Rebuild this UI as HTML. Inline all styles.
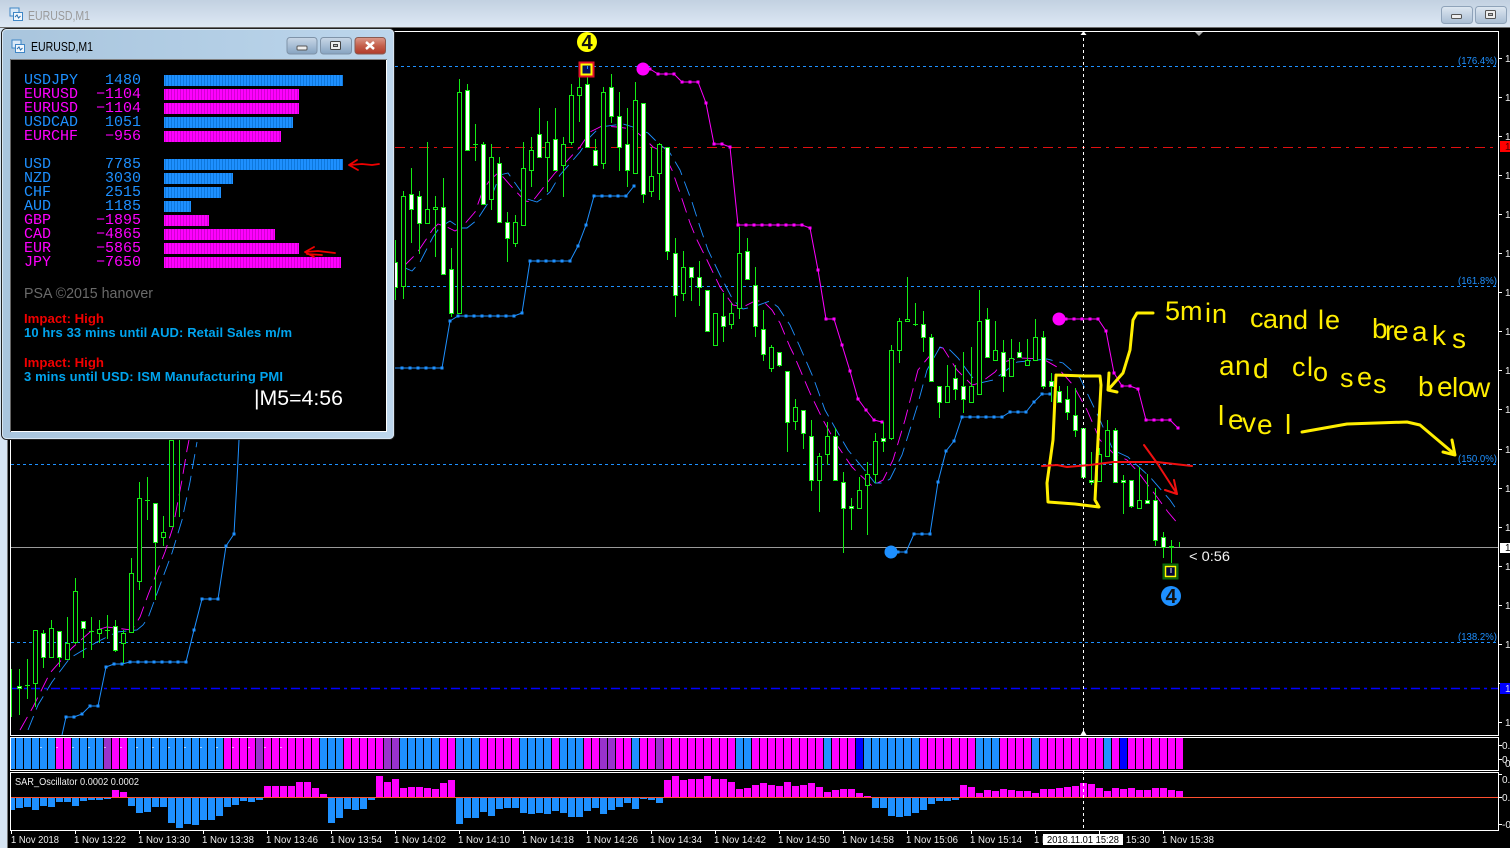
<!DOCTYPE html>
<html><head><meta charset="utf-8"><title>EURUSD,M1</title>
<style>html,body{margin:0;padding:0;background:#000;overflow:hidden}svg{display:block}text{font-family:"Liberation Sans",sans-serif}.m text{font-family:"Liberation Mono",monospace}</style></head>
<body>
<svg width="1510" height="848" viewBox="0 0 1510 848" xmlns="http://www.w3.org/2000/svg">
<defs>
<linearGradient id="tb" x1="0" y1="0" x2="0" y2="1"><stop offset="0" stop-color="#c2d1e1"/><stop offset="1" stop-color="#dde8f4"/></linearGradient>
<linearGradient id="pt" x1="0" y1="0" x2="1" y2="0"><stop offset="0" stop-color="#a9c5dd"/><stop offset=".6" stop-color="#b4cfe6"/><stop offset="1" stop-color="#bdd6ec"/></linearGradient>
<linearGradient id="btn" x1="0" y1="0" x2="0" y2="1"><stop offset="0" stop-color="#dfe8f2"/><stop offset=".5" stop-color="#c3d2e2"/><stop offset="1" stop-color="#a9bdd3"/></linearGradient>
<linearGradient id="btnp" x1="0" y1="0" x2="0" y2="1"><stop offset="0" stop-color="#c9d7e6"/><stop offset=".5" stop-color="#a8bed5"/><stop offset="1" stop-color="#86a3c0"/></linearGradient>
<linearGradient id="cls" x1="0" y1="0" x2="0" y2="1"><stop offset="0" stop-color="#dc9a8c"/><stop offset=".5" stop-color="#c4604c"/><stop offset="1" stop-color="#b03a2a"/></linearGradient>
<pattern id="sb" width="3" height="1" patternUnits="userSpaceOnUse"><rect width="3" height="1" fill="#1e90ff"/><rect width="1" height="1" fill="#0f78dc"/></pattern>
<pattern id="sm" width="3" height="1" patternUnits="userSpaceOnUse"><rect width="3" height="1" fill="#ff00ff"/><rect width="1" height="1" fill="#d400d4"/></pattern>
<clipPath id="cm"><rect x="11" y="32" width="1487" height="703"/></clipPath>
<clipPath id="c1"><rect x="11" y="738" width="1487" height="32"/></clipPath>
<clipPath id="c2"><rect x="11" y="773" width="1487" height="57"/></clipPath>
<marker id="db" markerWidth="3" markerHeight="3" refX="1.5" refY="1.5" markerUnits="userSpaceOnUse"><rect width="3" height="3" fill="#1e90ff"/></marker>
<marker id="dm" markerWidth="3" markerHeight="3" refX="1.5" refY="1.5" markerUnits="userSpaceOnUse"><rect width="3" height="3" fill="#ff00ff"/></marker>
</defs>
<rect width="1510" height="848" fill="#000"/>
<rect x="0" y="0" width="1510" height="27" fill="url(#tb)"/>
<rect x="0" y="27" width="1510" height="1" fill="#6e6e6e"/>
<rect x="0" y="28" width="7" height="820" fill="#d6e4f2"/>
<rect x="7" y="28" width="1" height="820" fill="#777"/>
<g transform="translate(10,8)"><rect x="0" y="0" width="9" height="8" fill="#dbe9f7" stroke="#3f86c6"/><rect x="3.500" y="4.500" width="9" height="8" fill="#f3f8fd" stroke="#3f86c6"/><path d="M5 9l2-2 1.500 3 2-2" fill="none" stroke="#2a6fb0"/></g>
<text x="28" y="20" font-size="12.500" fill="#9a9a9a" textLength="62" lengthAdjust="spacingAndGlyphs">EURUSD,M1</text>
<rect x="1441.500" y="6.500" width="31" height="17" rx="3" fill="url(#btn)" stroke="#8fa3b9"/>
<rect x="1451.500" y="14.500" width="10" height="4" rx="1" fill="#eee" stroke="#555"/>
<rect x="1475.500" y="6.500" width="31" height="17" rx="3" fill="url(#btn)" stroke="#8fa3b9"/>
<rect x="1485.500" y="10.500" width="10" height="8" rx="1" fill="#eee" stroke="#555"/><rect x="1488.500" y="13.500" width="4" height="2" fill="#bbb" stroke="#555"/>

<g fill="none" stroke="#fff">
<path d="M10.500 31.500H1498.500V735.500H10.500z"/>
<path d="M10.500 737.500H1498.500V770.500H10.500z"/>
<path d="M10.500 772.500H1498.500V830.500H10.500z"/>
</g>

<g clip-path="url(#cm)">
<g fill="none" stroke="#1e90ff" stroke-dasharray="3 3">
<path d="M11 66.500H1497"/><path d="M11 286.500H1497"/><path d="M11 464.500H1497"/><path d="M11 642.500H1497"/>
</g>
<path d="M11 147.500H1497" fill="none" stroke="#e01010" stroke-dasharray="10 5 3 6"/>
<path d="M11 688.500H1498" fill="none" stroke="#0000ff" stroke-width="1.500" stroke-dasharray="9 4 3 4"/>
<path d="M11 547.500H1498" fill="none" stroke="#9a9a9a"/>

<g fill="none" stroke="#ff00ff" stroke-width=".9" stroke-dasharray="15 7">
<path d="M20 730L33 707L50 673L72 648L90 632L107 627L115 628L132 630L140 617L148 595L157 572L165 552L173 527L182 480L187 450L189 440"/>
<path d="M403 267L417 253L433 229L438 224L447 227L455 231L462 227L475 212L483 190L490 180L498 173L503 177L510 185L525 201L532 202L543 188L555 173L565 163L580 147L590 132L602 126L617 127L632 129L643 137L653 147L663 152L672 170L680 193L690 223L697 240L707 260L720 287L733 305L743 307L755 301L763 301L772 310L780 323L790 347L793 353L810 393L823 420L837 445L852 467L858 473L872 486L883 480L893 460L905 420L918 370L937 347L943 348L957 370L972 385L980 383L995 372L1003 362L1020 358L1043 359L1057 367L1073 385L1087 410L1100 440L1113 453L1127 460L1138 472L1157 497L1168 512L1179 525"/>
</g>
<g fill="none" stroke="#1e90ff" stroke-width=".9" stroke-dasharray="15 7">
<path d="M28 730L38 705L52 682L70 658L80 652L97 642L117 632L137 630L143 625L148 618L163 577L172 553L182 520L190 482L197 442"/>
<path d="M403 267L412 271L420 262L433 237L440 227L450 221L460 228L467 228L477 220L490 200L500 175L508 173L520 190L527 199L537 202L543 198L550 192L560 175L580 152L590 137L600 127L623 124L633 127L648 133L657 142L670 153L680 170L692 202L700 227L708 250L720 275L733 300L743 309L753 307L770 301L778 307L790 325L800 347L813 377L825 410L838 433L848 450L867 473L875 483L883 483L890 479L902 455L917 407L927 370L940 347L950 350L958 358L972 377L980 383L993 380L1003 373L1017 362L1047 359L1063 363L1080 378L1100 420L1113 450L1128 457L1150 477L1170 500L1179 513"/>
</g>

<g fill="none" stroke="#1e90ff" marker-start="url(#db)" marker-mid="url(#db)" marker-end="url(#db)">
<path d="M66 717L74 717L82 714L90 706L98 706L106 667L114 664L122 664L130 662L138 662L146 662L154 662L162 662L170 662L178 662L186 662L194 630L202 599L210 599L218 599L226 546L234 534"/>
<path d="M402 368L410 368L418 368L426 368L434 368L442 368L450 321L458 316L466 316L474 316L482 316L490 316L498 316L506 316L514 316L522 313L530 261L538 261L546 261L554 261L562 261L570 261L578 246L586 225L594 196L602 196L610 196L618 196L626 196L634 186"/>
<path d="M898 552L906 552L914 534L922 534L930 534L938 482L946 451L954 441L962 417L970 417L978 417L986 417L994 417L1002 417L1010 412L1018 412L1026 412L1034 402L1042 394L1050 394"/>
</g>
<path d="M234 534L237 480L239 440M62 735L66 717M395 368H402" fill="none" stroke="#1e90ff"/>
<path d="M891 552H898" stroke="#1e90ff"/>
<g fill="none" stroke="#ff00ff" marker-start="url(#dm)" marker-mid="url(#dm)" marker-end="url(#dm)">
<path d="M650 69L658 74L666 74L674 74L682 82L690 82L698 82L706 103L714 144L722 144L730 147L738 225L746 225L754 225L762 225L770 225L778 225L786 225L794 225L802 225L810 228L818 270L826 319L834 319L842 345L850 371L858 399L866 410L874 420L882 422"/>
<path d="M1066 319L1074 319L1082 319L1090 319L1098 319L1106 331L1114 373L1122 386L1130 386L1138 389L1146 420L1154 420L1162 420L1170 420L1178 428"/>
</g>
<circle cx="643" cy="69" r="6.500" fill="#ff00ff"/>
<circle cx="1059" cy="319" r="6.500" fill="#ff00ff"/>
<circle cx="891" cy="552" r="6.500" fill="#1e90ff"/>

<path fill="none" stroke="#14ec14" d="M11.500 669V717M19.500 669V715M27.500 659V699M35.500 630V707M43.500 630V668M51.500 620V657M59.500 631V667M67.500 617V660M75.500 578V644M83.500 621V658M91.500 617V650M99.500 620V643M107.500 615V639M115.500 620V652M123.500 630V663M131.500 558V632M139.500 482V590M147.500 477V520M155.500 503V600M163.500 516V546M171.500 440V526M179.500 440V517M395.500 240V300M403.500 191V299M411.500 168V243M419.500 191V254M427.500 142V223M435.500 196V257M443.500 178V274M451.500 248V317M459.500 79V313M467.500 84V150M475.500 124V161M483.500 142V204M491.500 144V210M499.500 157V222M507.500 212V262M515.500 215V247M523.500 142V225M531.500 137V187M539.500 108V157M547.500 121V192M555.500 108V170M563.500 137V197M571.500 84V145M579.500 77V122M587.500 77V147M595.500 139V165M603.500 87V169M611.500 74V123M619.500 92V171M627.500 108V187M635.500 82V173M643.500 103V203M651.500 147V197M659.500 143V200M667.500 147V260M675.500 238V317M683.500 251V301M691.500 267V301M699.500 261V306M707.500 290V331M715.500 313V345M723.500 293V342M731.500 303V329M739.500 227V319M747.500 238V279M755.500 267V337M763.500 310V361M771.500 345V372M779.500 352V367M787.500 371V452M795.500 399V430M803.500 410V449M811.500 420V491M819.500 453V512M827.500 422V465M835.500 428V480M843.500 472V553M851.500 498V530M859.500 477V508M867.500 462V535M875.500 433V483M883.500 422V452M891.500 345V440M899.500 318V363M907.500 277V320M915.500 303V326M923.500 311V352M931.500 334V381M939.500 386V418M947.500 365V402M955.500 365V400M963.500 352V413M971.500 347V402M979.500 290V394M987.500 308V357M995.500 321V360M1003.500 340V392M1011.500 339V376M1019.500 342V357M1027.500 339V365M1035.500 319V360M1043.500 331V389M1051.500 373V402M1059.500 386V402M1067.500 386V420M1075.500 388V437M1083.500 428V477M1091.500 452V485M1099.500 448V481M1107.500 420V456M1115.500 428V482M1123.500 475V514M1131.500 480V508M1139.500 467V508M1147.500 474V503M1155.500 488V546M1163.500 532V558M1171.500 540V563M1179.500 542V547M25 685.500h5M89 631.500h5M105 630.500h5M145 500.500h5M473 144.500h5M913 324.500h5"/>
<path fill="#000" stroke="#14ec14" d="M33.500 630.500h4V683.500h-4zM49.500 628.500h4V657.500h-4zM65.500 643.500h4V659.500h-4zM73.500 591.500h4V642.500h-4zM97.500 629.500h4V633.500h-4zM121.500 633.500h4V643.500h-4zM129.500 573.500h4V632.500h-4zM137.500 498.500h4V581.500h-4zM161.500 532.500h4V537.500h-4zM169.500 440.500h4V526.500h-4zM401.500 196.500h4V286.500h-4zM425.500 209.500h4V223.500h-4zM433.500 207.500h4V209.500h-4zM457.500 92.500h4V313.500h-4zM489.500 157.500h4V199.500h-4zM513.500 222.500h4V243.500h-4zM521.500 168.500h4V225.500h-4zM529.500 150.500h4V170.500h-4zM545.500 142.500h4V157.500h-4zM561.500 144.500h4V165.500h-4zM569.500 95.500h4V142.500h-4zM577.500 87.500h4V95.500h-4zM601.500 92.500h4V163.500h-4zM633.500 100.500h4V173.500h-4zM649.500 176.500h4V191.500h-4zM657.500 144.500h4V173.500h-4zM681.500 267.500h4V293.500h-4zM713.500 313.500h4V345.500h-4zM729.500 313.500h4V324.500h-4zM737.500 253.500h4V308.500h-4zM769.500 347.500h4V368.500h-4zM793.500 407.500h4V421.500h-4zM817.500 456.500h4V480.500h-4zM825.500 436.500h4V454.500h-4zM857.500 490.500h4V508.500h-4zM865.500 474.500h4V485.500h-4zM873.500 441.500h4V474.500h-4zM889.500 350.500h4V438.500h-4zM897.500 321.500h4V350.500h-4zM905.500 319.500h4V321.500h-4zM945.500 386.500h4V402.500h-4zM969.500 386.500h4V402.500h-4zM977.500 321.500h4V394.500h-4zM993.500 350.500h4V360.500h-4zM1009.500 358.500h4V376.500h-4zM1025.500 360.500h4V365.500h-4zM1033.500 337.500h4V360.500h-4zM1097.500 454.500h4V481.500h-4zM1105.500 430.500h4V456.500h-4zM1137.500 500.500h4V508.500h-4z"/>
<path fill="#fff" stroke="#14ec14" d="M17.500 686.500h4V688.500h-4zM41.500 633.500h4V657.500h-4zM57.500 631.500h4V657.500h-4zM81.500 621.500h4V628.500h-4zM113.500 626.500h4V650.500h-4zM153.500 503.500h4V542.500h-4zM393.500 262.500h4V287.500h-4zM409.500 194.500h4V209.500h-4zM417.500 196.500h4V223.500h-4zM441.500 207.500h4V274.500h-4zM449.500 269.500h4V313.500h-4zM465.500 90.500h4V150.500h-4zM481.500 144.500h4V204.500h-4zM497.500 163.500h4V222.500h-4zM505.500 222.500h4V238.500h-4zM537.500 134.500h4V157.500h-4zM553.500 139.500h4V170.500h-4zM585.500 84.500h4V147.500h-4zM593.500 150.500h4V165.500h-4zM609.500 87.500h4V116.500h-4zM617.500 116.500h4V147.500h-4zM625.500 144.500h4V170.500h-4zM641.500 103.500h4V194.500h-4zM665.500 147.500h4V251.500h-4zM673.500 253.500h4V295.500h-4zM689.500 267.500h4V277.500h-4zM697.500 277.500h4V287.500h-4zM705.500 290.500h4V331.500h-4zM721.500 316.500h4V326.500h-4zM745.500 251.500h4V279.500h-4zM753.500 285.500h4V326.500h-4zM761.500 329.500h4V354.500h-4zM777.500 352.500h4V365.500h-4zM785.500 371.500h4V422.500h-4zM801.500 410.500h4V433.500h-4zM809.500 436.500h4V480.500h-4zM833.500 436.500h4V480.500h-4zM841.500 482.500h4V508.500h-4zM849.500 506.500h4V508.500h-4zM881.500 438.500h4V441.500h-4zM921.500 324.500h4V337.500h-4zM929.500 337.500h4V381.500h-4zM937.500 386.500h4V402.500h-4zM953.500 378.500h4V389.500h-4zM961.500 386.500h4V399.500h-4zM985.500 319.500h4V357.500h-4zM1001.500 352.500h4V376.500h-4zM1017.500 352.500h4V357.500h-4zM1041.500 337.500h4V386.500h-4zM1049.500 381.500h4V386.500h-4zM1057.500 391.500h4V402.500h-4zM1065.500 399.500h4V412.500h-4zM1073.500 415.500h4V430.500h-4zM1081.500 428.500h4V477.500h-4zM1089.500 480.500h4V482.500h-4zM1113.500 430.500h4V482.500h-4zM1121.500 480.500h4V482.500h-4zM1129.500 480.500h4V506.500h-4zM1145.500 500.500h4V503.500h-4zM1153.500 500.500h4V540.500h-4zM1161.500 537.500h4V547.500h-4zM1169.500 546.500h4V547.500h-4z"/>

<path d="M1083.500 32V735" fill="none" stroke="#fff" stroke-dasharray="3 3"/>
<path d="M1083.500 31l-3 4h6zM1083.500 730l-3 5h6z" fill="#fff"/>
<path d="M1194 31h10l-5 5z" fill="#aaa"/>
</g>

<rect x="579.500" y="62.500" width="14" height="14" fill="#000" stroke="#e0102a" stroke-width="2"/>
<rect x="581.500" y="64.500" width="10" height="10" fill="#04105a" stroke="#ffff00" stroke-width="2"/>
<path d="M587.500 66v3" stroke="#1e90ff"/>
<circle cx="587" cy="42" r="10" fill="#ffff00"/>
<text x="587" y="49" font-size="20" text-anchor="middle" fill="#111" font-weight="bold">4</text>
<rect x="1163.500" y="564.500" width="14" height="14" fill="#000" stroke="#0b6b0b" stroke-width="2"/>
<rect x="1165.500" y="566.500" width="10" height="10" fill="#02023c" stroke="#ffff00" stroke-width="1.500"/>
<path d="M1171 568v5" stroke="#ddd"/>
<circle cx="1171" cy="596" r="10" fill="#1e90ff"/>
<text x="1171" y="603" font-size="20" text-anchor="middle" fill="#111" font-weight="bold">4</text>
<text x="1189" y="561" font-size="14" fill="#f4f4f4" textLength="41" lengthAdjust="spacingAndGlyphs">&lt; 0:56</text>

<g fill="none" stroke="#ffee00" stroke-width="3" stroke-linecap="round" stroke-linejoin="round">
<path d="M1056 375L1085 376L1100 376L1101 385L1098 440L1095 500L1099 507L1075 504L1048 502L1047 483L1053 440L1056 375"/>
<path d="M1153 313L1137 313L1133 320L1130 350L1123 373L1108 390M1109 373L1108 390L1117 392"/>
<path d="M1302 432L1347 424L1407 422L1420 425L1452 452M1452 440L1455 455L1443 452"/>
</g>
<g fill="#ffee00">
<text font-size="27" x="1165 1180 1205 1212" y="320 320 322 323">5min</text>
<text font-size="27" x="1250 1263 1278 1293 1318 1325" y="327 328 329 329 329 329">candle</text>
<text font-size="28" x="1372 1385 1393 1412 1432 1452" y="338 340 340 341 345 348">breaks</text>
<text font-size="28" x="1219 1235 1253" y="375 375 378">and</text>
<text font-size="27" x="1292 1307 1313 1340 1357 1373" y="376 376 381 387 386 393">closes</text>
<text font-size="28" x="1418 1437 1452 1458 1470" y="396 396 397 396 397">below</text>
<text font-size="28" x="1218 1228 1242 1257 1285" y="425 429 432 434 434">level</text>
</g>
<g fill="none" stroke="#f01010" stroke-width="2" stroke-linecap="round" stroke-linejoin="round">
<path d="M1042 466L1057 465L1067 467L1090 465L1113 462L1157 462L1192 466"/>
<path d="M1144 445L1157 463L1177 494M1174 480L1177 494L1165 490"/>
</g>

<g fill="#1e90ff" font-size="10">
<text x="1458" y="64" textLength="39" lengthAdjust="spacingAndGlyphs">(176.4%)</text>
<text x="1458" y="284" textLength="39" lengthAdjust="spacingAndGlyphs">(161.8%)</text>
<text x="1458" y="462" textLength="39" lengthAdjust="spacingAndGlyphs">(150.0%)</text>
<text x="1458" y="640" textLength="39" lengthAdjust="spacingAndGlyphs">(138.2%)</text>
</g>

<path stroke="#fff" fill="none" d="M1498 58.500h4M1498 97.500h4M1498 136.500h4M1498 175.500h4M1498 214.500h4M1498 253.500h4M1498 292.500h4M1498 331.500h4M1498 370.500h4M1498 409.500h4M1498 449.500h4M1498 488.500h4M1498 527.500h4M1498 566.500h4M1498 605.500h4M1498 644.500h4M1498 683.500h4M1498 722.500h4M1498 745.500h4M1498 759.500h4M1498 774.500h4M1498 797.500h4M1498 824.500h4"/>
<rect x="1500" y="141" width="10" height="11" fill="#ff0000"/>
<rect x="1500" y="543" width="10" height="10" fill="#fff"/>
<rect x="1500" y="683" width="10" height="11" fill="#0000ff"/>
<g font-size="10" fill="#eee">
<text x="1505" y="62">1</text><text x="1505" y="101">1</text><text x="1505" y="140">1</text><text x="1505" y="179">1</text><text x="1505" y="218">1</text><text x="1505" y="257">1</text><text x="1505" y="296">1</text><text x="1505" y="335">1</text><text x="1505" y="374">1</text><text x="1505" y="413">1</text><text x="1505" y="453">1</text><text x="1505" y="492">1</text><text x="1505" y="531">1</text><text x="1505" y="570">1</text><text x="1505" y="609">1</text><text x="1505" y="648">1</text><text x="1505" y="726">1</text>
<text x="1505" y="150" fill="#400">1</text><text x="1505" y="551" fill="#000">1</text><text x="1505" y="692" fill="#dde">1</text>
<text x="1502" y="749">0.</text><text x="1502" y="763">0</text><text x="1505" y="767">0</text>
<text x="1502" y="783">0.</text><text x="1502" y="801">0.</text><text x="1502" y="828">-0</text>
</g>

<g clip-path="url(#c1)" fill="none" stroke-width="31" stroke-dasharray="7 1">
<path stroke="#1e90ff" d="M8 753.500H56M72 753.500H104M128 753.500H224M320 753.500H344M400 753.500H440M456 753.500H480M520 753.500H552M560 753.500H584M632 753.500H640M736 753.500H752M824 753.500H832M864 753.500H920M976 753.500H1000M1032 753.500H1040M1104 753.500H1112"/>
<path stroke="#ff00ff" d="M56 753.500H72M112 753.500H128M224 753.500H256M264 753.500H320M344 753.500H384M440 753.500H456M480 753.500H520M552 753.500H560M584 753.500H600M616 753.500H632M640 753.500H656M664 753.500H736M752 753.500H824M832 753.500H856M920 753.500H976M1000 753.500H1032M1040 753.500H1104M1112 753.500H1120M1128 753.500H1184"/>
<path stroke="#9932cc" d="M104 753.500H112M256 753.500H264M384 753.500H400M600 753.500H616M656 753.500H664"/>
<path stroke="#0000ff" d="M856 753.500H864M1120 753.500H1128"/>
</g>
<path d="M40 747.500H290" stroke="#fff" stroke-dasharray="2 14" opacity=".6" fill="none"/>

<g clip-path="url(#c2)" fill="none" stroke-width="7">
<path stroke="#1e90ff" d="M11.500 797v13M19.500 797v11M27.500 797v10M35.500 797v13M43.500 797v9M51.500 797v10M59.500 797v5M67.500 797v5M75.500 797v9M83.500 797v4M91.500 797v3M99.500 797v3M107.500 797v2M131.500 797v9M139.500 797v16M147.500 797v15M155.500 797v10M163.500 797v10M171.500 797v26M179.500 797v31M187.500 797v27M195.500 797v28M203.500 797v23M211.500 797v23M219.500 797v19M227.500 797v10M235.500 797v8M243.500 797v4M251.500 797v5M259.500 797v3M331.500 797v26M339.500 797v21M347.500 797v12M355.500 797v13M363.500 797v12M371.500 797v3M459.500 797v27M467.500 797v21M475.500 797v21M483.500 797v15M491.500 797v19M499.500 797v12M507.500 797v11M515.500 797v11M523.500 797v16M531.500 797v17M539.500 797v16M547.500 797v17M555.500 797v14M563.500 797v16M571.500 797v20M579.500 797v20M587.500 797v14M595.500 797v11M603.500 797v17M611.500 797v13M619.500 797v10M627.500 797v6M635.500 797v12M643.500 797v2M651.500 797v3M659.500 797v6M875.500 797v11M883.500 797v11M891.500 797v19M899.500 797v20M907.500 797v19M915.500 797v16M923.500 797v13M931.500 797v7M939.500 797v4M947.500 797v4M955.500 797v3"/>
<path stroke="#ff00ff" d="M115.500 797v-7M123.500 797v-5M267.500 797v-11M275.500 797v-11M283.500 797v-11M291.500 797v-11M299.500 797v-15M307.500 797v-15M315.500 797v-9M323.500 797v-3M379.500 797v-21M387.500 797v-15M395.500 797v-18M403.500 797v-9M411.500 797v-10M419.500 797v-10M427.500 797v-9M435.500 797v-8M443.500 797v-14M451.500 797v-17M667.500 797v-17M675.500 797v-21M683.500 797v-17M691.500 797v-18M699.500 797v-18M707.500 797v-21M715.500 797v-18M723.500 797v-18M731.500 797v-15M739.500 797v-8M747.500 797v-9M755.500 797v-12M763.500 797v-14M771.500 797v-12M779.500 797v-11M787.500 797v-15M795.500 797v-11M803.500 797v-12M811.500 797v-14M819.500 797v-10M827.500 797v-5M835.500 797v-7M843.500 797v-8M851.500 797v-8M859.500 797v-4M867.500 797v-1M963.500 797v-12M971.500 797v-10M979.500 797v-4M987.500 797v-7M995.500 797v-6M1003.500 797v-8M1011.500 797v-7M1019.500 797v-6M1027.500 797v-6M1035.500 797v-4M1043.500 797v-8M1051.500 797v-8M1059.500 797v-9M1067.500 797v-10M1075.500 797v-11M1083.500 797v-14M1091.500 797v-13M1099.500 797v-9M1107.500 797v-6M1115.500 797v-9M1123.500 797v-8M1131.500 797v-9M1139.500 797v-7M1147.500 797v-7M1155.500 797v-9M1163.500 797v-9M1171.500 797v-7M1179.500 797v-6"/>
</g>
<path d="M11 797.500H1498" stroke="#ff5030" fill="none"/>
<path d="M1083.500 771V830" stroke="#fff" stroke-dasharray="3 3" fill="none"/>
<text x="15" y="785" font-size="10.500" fill="#eee" textLength="124" lengthAdjust="spacingAndGlyphs">SAR_Oscillator 0.0002 0.0002</text>

<path stroke="#fff" fill="none" d="M11.500 830v4M75.500 830v4M139.500 830v4M203.500 830v4M267.500 830v4M331.500 830v4M395.500 830v4M459.500 830v4M523.500 830v4M587.500 830v4M651.500 830v4M715.500 830v4M779.500 830v4M843.500 830v4M907.500 830v4M971.500 830v4M1035.500 830v4M1099.500 830v4M1163.500 830v4"/>
<g font-size="10" fill="#eee">
<text x="11" y="843" textLength="48" lengthAdjust="spacingAndGlyphs">1 Nov 2018</text>
<text x="74" y="843" textLength="52" lengthAdjust="spacingAndGlyphs">1 Nov 13:22</text>
<text x="138" y="843" textLength="52" lengthAdjust="spacingAndGlyphs">1 Nov 13:30</text>
<text x="202" y="843" textLength="52" lengthAdjust="spacingAndGlyphs">1 Nov 13:38</text>
<text x="266" y="843" textLength="52" lengthAdjust="spacingAndGlyphs">1 Nov 13:46</text>
<text x="330" y="843" textLength="52" lengthAdjust="spacingAndGlyphs">1 Nov 13:54</text>
<text x="394" y="843" textLength="52" lengthAdjust="spacingAndGlyphs">1 Nov 14:02</text>
<text x="458" y="843" textLength="52" lengthAdjust="spacingAndGlyphs">1 Nov 14:10</text>
<text x="522" y="843" textLength="52" lengthAdjust="spacingAndGlyphs">1 Nov 14:18</text>
<text x="586" y="843" textLength="52" lengthAdjust="spacingAndGlyphs">1 Nov 14:26</text>
<text x="650" y="843" textLength="52" lengthAdjust="spacingAndGlyphs">1 Nov 14:34</text>
<text x="714" y="843" textLength="52" lengthAdjust="spacingAndGlyphs">1 Nov 14:42</text>
<text x="778" y="843" textLength="52" lengthAdjust="spacingAndGlyphs">1 Nov 14:50</text>
<text x="842" y="843" textLength="52" lengthAdjust="spacingAndGlyphs">1 Nov 14:58</text>
<text x="906" y="843" textLength="52" lengthAdjust="spacingAndGlyphs">1 Nov 15:06</text>
<text x="970" y="843" textLength="52" lengthAdjust="spacingAndGlyphs">1 Nov 15:14</text>
<text x="1034" y="843" textLength="52" lengthAdjust="spacingAndGlyphs">1 Nov 15:22</text>
<text x="1098" y="843" textLength="52" lengthAdjust="spacingAndGlyphs">1 Nov 15:30</text>
<text x="1162" y="843" textLength="52" lengthAdjust="spacingAndGlyphs">1 Nov 15:38</text>
</g>
<rect x="1043" y="834" width="80" height="11" fill="#fff"/>
<text x="1047" y="843" font-size="10" fill="#000" textLength="72" lengthAdjust="spacingAndGlyphs">2018.11.01 15:28</text>

<!-- floating panel -->
<rect x="1.500" y="28.500" width="393" height="411" rx="5" fill="url(#pt)" stroke="#222"/>
<rect x="2.500" y="29.500" width="391" height="409" rx="4" fill="none" stroke="#d8e6f2"/>
<g transform="translate(12,40)"><rect x="0" y="0" width="9" height="8" fill="#dbe9f7" stroke="#3f86c6"/><rect x="3.500" y="4.500" width="9" height="8" fill="#f3f8fd" stroke="#3f86c6"/><path d="M5 9l2-2 1.500 3 2-2" fill="none" stroke="#2a6fb0"/></g>
<text x="31" y="51" font-size="12.500" fill="#000" textLength="62" lengthAdjust="spacingAndGlyphs">EURUSD,M1</text>
<rect x="287" y="37.500" width="30" height="16.500" rx="3" fill="url(#btnp)" stroke="#7f93a8"/>
<rect x="297" y="46" width="10" height="4" rx="1" fill="#eee" stroke="#555"/>
<rect x="320.500" y="37.500" width="31" height="16.500" rx="3" fill="url(#btnp)" stroke="#7f93a8"/>
<rect x="330.500" y="41.500" width="10" height="8" rx="1" fill="#eee" stroke="#444"/><rect x="333.500" y="44.500" width="4" height="2" fill="#bbb" stroke="#444"/>
<rect x="355" y="37.500" width="30.500" height="16.500" rx="3" fill="url(#cls)" stroke="#8a5a50"/>
<path d="M366 42l8 7M374 42l-8 7" stroke="#fff" stroke-width="2.500" fill="none"/>
<rect x="10" y="59" width="377" height="373" fill="#fff"/>
<rect x="10" y="59" width="377" height="1" fill="#808080"/><rect x="10" y="59" width="1" height="373" fill="#666"/>
<rect x="11" y="60" width="375" height="371" fill="#000"/>

<g class="m" font-size="15">
<g fill="#1e90ff">
<text x="24" y="84">USDJPY</text><text x="141" y="84" text-anchor="end">1480</text>
<text x="24" y="126">USDCAD</text><text x="141" y="126" text-anchor="end">1051</text>
<text x="24" y="168">USD</text><text x="141" y="168" text-anchor="end">7785</text>
<text x="24" y="182">NZD</text><text x="141" y="182" text-anchor="end">3030</text>
<text x="24" y="196">CHF</text><text x="141" y="196" text-anchor="end">2515</text>
<text x="24" y="210">AUD</text><text x="141" y="210" text-anchor="end">1185</text>
</g>
<g fill="#ff00ff">
<text x="24" y="98">EURUSD</text><text x="141" y="98" text-anchor="end">−1104</text>
<text x="24" y="112">EURUSD</text><text x="141" y="112" text-anchor="end">−1104</text>
<text x="24" y="140">EURCHF</text><text x="141" y="140" text-anchor="end">−956</text>
<text x="24" y="224">GBP</text><text x="141" y="224" text-anchor="end">−1895</text>
<text x="24" y="238">CAD</text><text x="141" y="238" text-anchor="end">−4865</text>
<text x="24" y="252">EUR</text><text x="141" y="252" text-anchor="end">−5865</text>
<text x="24" y="266">JPY</text><text x="141" y="266" text-anchor="end">−7650</text>
</g>
</g>
<rect x="164" y="75" width="179" height="11" fill="url(#sb)"/>
<rect x="164" y="89" width="135" height="11" fill="url(#sm)"/>
<rect x="164" y="103" width="135" height="11" fill="url(#sm)"/>
<rect x="164" y="117" width="129" height="11" fill="url(#sb)"/>
<rect x="164" y="131" width="117" height="11" fill="url(#sm)"/>
<rect x="164" y="159" width="179" height="11" fill="url(#sb)"/>
<rect x="164" y="173" width="69" height="11" fill="url(#sb)"/>
<rect x="164" y="187" width="57" height="11" fill="url(#sb)"/>
<rect x="164" y="201" width="27" height="11" fill="url(#sb)"/>
<rect x="164" y="215" width="45" height="11" fill="url(#sm)"/>
<rect x="164" y="229" width="111" height="11" fill="url(#sm)"/>
<rect x="164" y="243" width="135" height="11" fill="url(#sm)"/>
<rect x="164" y="257" width="177" height="11" fill="url(#sm)"/>

<g fill="none" stroke="#f00000" stroke-width="1.800" stroke-linecap="round" stroke-linejoin="round">
<path d="M349 165L362 164L372 165L379 164M357 160L349 165L358 170"/>
<path d="M305 252L318 251L335 253M307 254L322 255M314 247L305 252L314 257"/>
</g>

<text x="24" y="298" font-size="14.500" fill="#6a6a6a" textLength="129" lengthAdjust="spacingAndGlyphs">PSA ©2015 hanover</text>
<g font-size="13" font-weight="bold">
<text x="24" y="323" fill="#f00000" textLength="80" lengthAdjust="spacingAndGlyphs">Impact: High</text>
<text x="24" y="337" fill="#00a4ee" textLength="268" lengthAdjust="spacing">10 hrs 33 mins until AUD: Retail Sales m/m</text>
<text x="24" y="367" fill="#f00000" textLength="80" lengthAdjust="spacingAndGlyphs">Impact: High</text>
<text x="24" y="381" fill="#00a4ee" textLength="259" lengthAdjust="spacing">3 mins until USD: ISM Manufacturing PMI</text>
</g>
<text x="254" y="405" font-size="21" fill="#fff" textLength="89" lengthAdjust="spacingAndGlyphs">|M5=4:56</text>
</svg>
</body></html>
